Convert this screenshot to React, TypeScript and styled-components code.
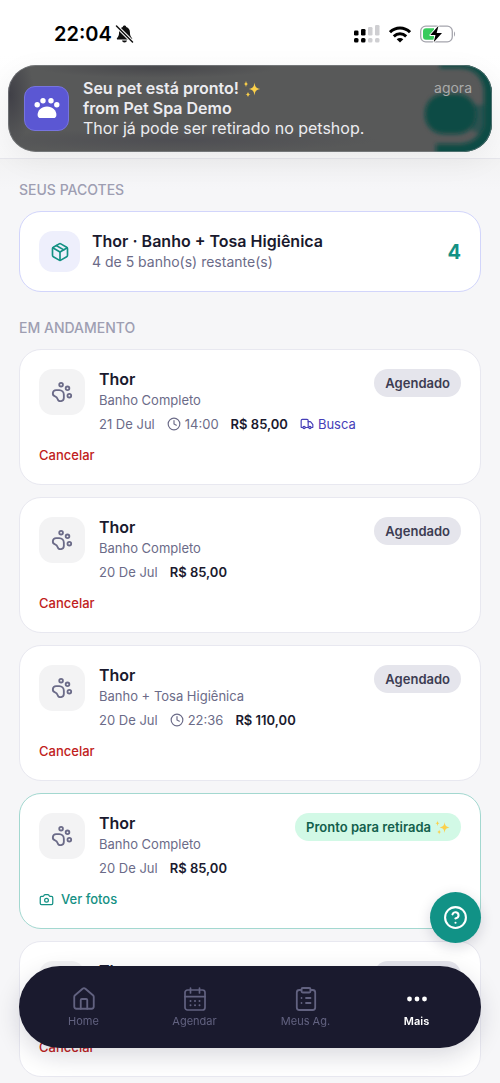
import React from "react";
import styled, { createGlobalStyle, css } from "styled-components";
import { Camera, CircleQuestionMark, Clock, House, Package, PawPrint, Truck } from "lucide-react";

const GlobalStyle = createGlobalStyle`
  *, *::before, *::after { box-sizing: border-box; }
  body {
    margin: 0;
    background: #f6f6f8;
    color: #1a1a2e;
    font-family: Inter, "Liberation Sans", sans-serif;
    font-size: 14px;
    line-height: 20px;
  }
  h1, h2, h3, p, ul { margin: 0; padding: 0; }
  ul { list-style: none; }
  button { border: 0; padding: 0; background: none; font: inherit; color: inherit; cursor: pointer; }
  svg { display: block; flex: none; }
`;

const Header = styled.header`
  padding: 20px 8px 6px;
  background: linear-gradient(#ffffff 35%, #f8f8f9);
  border-bottom: 1px solid #e6e6ec;
`;

const StatusBar = styled.div`
  display: flex;
  align-items: center;
  justify-content: space-between;
  height: 28px;
  margin: 0 36px 17px 46px;
  color: #000;
`;

const StatusGroup = styled.div<{ $gap: number }>`
  display: flex;
  align-items: center;
  gap: ${(p) => p.$gap}px;
`;

const Time = styled.time`
  font-size: 20px;
  font-weight: 600;
  line-height: 28px;
`;

const Banner = styled.section`
  position: relative;
  overflow: hidden;
  display: flex;
  gap: 14px;
  padding: 13px 20px 14px 16px;
  border-radius: 28px;
  color: #ececf0;
  background:
    radial-gradient(ellipse 120px 10px at 150px 3px, #48484c, transparent),
    radial-gradient(ellipse 24px 50px at 2px 30px, #404047, transparent),
    radial-gradient(ellipse 200px 12px at 170px 75px, #4e4e53, transparent),
    #585959;
  box-shadow: 0 8px 30px rgba(0, 0, 0, 0.06);

  &::after {
    content: "";
    position: absolute;
    inset: 0;
    border: 1px solid rgba(150, 155, 160, 0.45);
    border-radius: inherit;
    pointer-events: none;
  }
`;

const BannerGlow = styled.svg`
  position: absolute;
  top: 0;
  right: 0;
`;

const AppIcon = styled.div`
  display: grid;
  place-items: center;
  align-self: center;
  width: 45px;
  height: 45px;
  border: 1px solid #7774df;
  border-radius: 11px;
  background: #5b57d3;
`;

const BannerText = styled.div`
  flex: 1;
  font-size: 16px;
  line-height: 20px;
`;

const BannerTitle = styled.h1`
  font-size: 16px;
  line-height: 20px;
  font-weight: 600;
`;

const BannerTime = styled.span`
  position: relative;
  font-size: 14px;
  color: #a9abab;
`;

const Main = styled.main`
  padding: 21px 19px 6px;
  background: linear-gradient(#f2f2f3, #f6f6f8 30px);
`;

const SectionTitle = styled.h2`
  margin-bottom: 11px;
  font-size: 14px;
  font-weight: 500;
  line-height: 20px;
  text-transform: uppercase;
  color: #9e9eb2;
`;

const cardFrame = css`
  padding: 19px;
  border: 1px solid #e8e8f0;
  border-radius: 22px;
  background: #fff;
`;

const PackageCard = styled.section`
  ${cardFrame}
  display: flex;
  align-items: center;
  gap: 12px;
  margin-bottom: 26px;
  border-color: #d2d5fb;
`;

const PackageIcon = styled.div`
  display: grid;
  place-items: center;
  width: 41px;
  height: 41px;
  border-radius: 14px;
  background: #eeeffc;
  color: #149184;
`;

const Info = styled.div`
  flex: 1;
  min-width: 0;
`;

const Name = styled.h3`
  font-size: 16px;
  font-weight: 600;
  line-height: 21px;
`;

const Detail = styled.p<{ $large?: boolean }>`
  font-size: ${(p) => (p.$large ? 14 : 13)}px;
  line-height: 20px;
  color: #6b6b88;
`;

const Remaining = styled.strong`
  font-size: 20px;
  font-weight: 700;
  color: #149184;
`;

const CardList = styled.ul`
  display: grid;
  gap: 12px;
`;

const Card = styled.li<{ $ready?: boolean }>`
  ${cardFrame}
  ${(p) => p.$ready && "border-color: #a3d8d0;"}
`;

const CardTop = styled.div`
  display: flex;
  align-items: flex-start;
  gap: 14px;
  margin-bottom: 11px;
`;

const PetIcon = styled.div`
  display: grid;
  place-items: center;
  width: 46px;
  height: 46px;
  border-radius: 14px;
  background: #f3f3f4;
  color: #6b6b88;
`;

const TopLine = styled.div`
  display: flex;
  justify-content: space-between;
  align-items: flex-start;
  height: 21px;
`;

const Badge = styled.span<{ $ready?: boolean }>`
  display: flex;
  align-items: center;
  gap: 4px;
  padding: 4px 11px;
  border-radius: 14px;
  font-size: 13px;
  font-weight: 600;
  line-height: 20px;
  background: ${(p) => (p.$ready ? "#d2f9e6" : "#e5e5ec")};
  color: ${(p) => (p.$ready ? "#13604c" : "#3c3c52")};
`;

const Meta = styled.div`
  display: flex;
  gap: 12px;
  margin-top: 4px;
  font-size: 13px;
  line-height: 20px;
  color: #6b6b88;
`;

const MetaItem = styled.span<{ $link?: boolean }>`
  display: inline-flex;
  align-items: center;
  gap: 4px;
  ${(p) => p.$link && "color: #463eb8;"}
`;

const Price = styled.strong`
  font-weight: 600;
  color: #1a1a2e;
`;

const CardAction = styled.button<{ $ready?: boolean }>`
  display: flex;
  align-items: center;
  gap: 7px;
  font-size: 13px;
  font-weight: 500;
  line-height: 20px;
  color: ${(p) => (p.$ready ? "#149184" : "#c02020")};
`;

const HelpButton = styled.button`
  position: fixed;
  right: 19px;
  bottom: 140px;
  display: grid;
  place-items: center;
  width: 51px;
  height: 51px;
  border-radius: 50%;
  background: #119286;
  color: #fff;
  box-shadow: 0 4px 14px rgba(20, 20, 50, 0.16);
`;

const TabBar = styled.nav`
  position: fixed;
  left: 19px;
  right: 19px;
  bottom: 35px;
  display: flex;
  padding: 20px 9px 19px;
  border-radius: 41px;
  background: #1a1a2e;
  box-shadow: 0 8px 24px rgba(20, 20, 50, 0.16);
`;

const Tab = styled.button<{ $active?: boolean }>`
  flex: 1;
  display: flex;
  flex-direction: column;
  align-items: center;
  gap: 1px;
  font-size: 11px;
  font-weight: ${(p) => (p.$active ? 600 : 400)};
  line-height: 16px;
  color: ${(p) => (p.$active ? "#ffffff" : "#626280")};
`;

const BellOff = () => (
  <svg width="19" height="20" viewBox="0 0 19 20" aria-hidden="true">
    <path d="M9.5 1.5c.9 0 1.6.6 1.7 1.4 2.400.7 3.700 2.600 3.700 5.100 0 3.300.8 4.600 2 5.900.6.7.3 1.600-.7 1.600H2.800c-1 0-1.300-.9-.7-1.600 1.200-1.300 2-2.600 2-5.900 0-2.500 1.300-4.400 3.700-5.100.1-.8.8-1.400 1.700-1.400zM7 16.500h5c-.3 1.200-1.200 2-2.500 2s-2.200-.8-2.500-2z" fill="#111" />
    <path d="M1.500 2 17.500 18" stroke="#fff" strokeWidth="3.600" />
    <path d="M1.500 2 17.500 18" stroke="#111" strokeWidth="1.500" strokeLinecap="round" />
  </svg>
);

const Signal = () => (
  <svg width="26" height="18" viewBox="0 0 26 18" aria-hidden="true">
    <g fill="#000">
      <rect x="0" y="5.500" width="4.500" height="5" rx="1.300" />
      <rect x="7" y="4" width="4.500" height="6.500" rx="1.300" />
      <rect x="0" y="13" width="4.500" height="4.500" rx="1.500" />
      <rect x="7" y="13" width="4.500" height="4.500" rx="1.500" />
    </g>
    <g fill="#cfcfd2">
      <rect x="14" y="2" width="4.500" height="8.500" rx="1.300" />
      <rect x="21" y="0" width="4.500" height="10.500" rx="1.300" />
      <rect x="14" y="13" width="4.500" height="4.500" rx="1.500" />
      <rect x="21" y="13" width="4.500" height="4.500" rx="1.500" />
    </g>
  </svg>
);

const Wifi = () => (
  <svg width="22" height="17" viewBox="0 0 22 17" fill="none" stroke="#000" strokeWidth="3" aria-hidden="true">
    <path d="M1 6.200c5.700-5.500 14.300-5.500 20 0" />
    <path d="M4.800 10.300c3.600-3.400 8.800-3.400 12.400 0" />
    <path d="M11 16.500 7.700 13.200c1.900-1.700 4.700-1.700 6.600 0z" fill="#000" stroke="none" />
  </svg>
);

const Battery = () => (
  <svg width="36" height="18" viewBox="0 0 36 18" aria-hidden="true">
    <rect x=".7" y="1.200" width="31.600" height="15.600" rx="5" fill="#fff" stroke="#a5a5ad" strokeWidth="1.300" />
    <path d="M6 3.200h8v11.600H6a3 3 0 0 1-3-3V6.200a3 3 0 0 1 3-3z" fill="#38cb5c" />
    <path d="M34 6.500c1.400.6 1.400 4.400 0 5z" fill="#a5a5ad" />
    <path d="M18.500.8 10.300 10h5.200l-1.800 7.200L22 8h-5.300z" fill="#000" stroke="#fff" strokeWidth="1.800" paintOrder="stroke" strokeLinejoin="round" />
  </svg>
);

const PawLogo = () => (
  <svg width="26" height="22" viewBox="0 0 26 22" fill="#fff" aria-hidden="true">
    <circle cx="3.200" cy="7.800" r="2.700" />
    <circle cx="9" cy="3.800" r="2.700" />
    <circle cx="17" cy="3.800" r="2.700" />
    <circle cx="22.800" cy="7.800" r="2.700" />
    <path d="M13 9.500c5.500 0 9.400 4 9.400 8.400 0 2-1.200 3.100-3 3.100H6.600c-1.800 0-3-1.100-3-3.100 0-4.400 3.900-8.400 9.400-8.400z" />
  </svg>
);

const Glow = () => (
  <BannerGlow width="90" height="87" viewBox="0 0 90 87" aria-hidden="true">
    <defs>
      <filter id="soft" x="-30%" y="-30%" width="160%" height="160%">
        <feGaussianBlur stdDeviation="2" />
      </filter>
    </defs>
    <g fill="#084c45" filter="url(#soft)">
      <path d="M38-8H104V95H34V79H56C72 79 77 70 82 62V24C80 12 72 3 58 3H38Z" />
      <rect x="23" y="29" width="51" height="40" rx="19" />
      <path d="M70 40H86V70L70 66Z" opacity=".5" />
    </g>
  </BannerGlow>
);

const InlineSvg = styled.svg`
  display: inline-block;
  vertical-align: text-bottom;
`;

const Sparkles = ({ size }: { size: number }) => (
  <InlineSvg width={size} height={size} viewBox="0 0 18 18" fill="#fbd04a" aria-hidden="true">
    <path d="M11.500 2.500c.6 4.300 1.400 5.600 6 6.500-4.600.9-5.400 2.200-6 6.500-.6-4.300-1.400-5.600-6-6.500 4.600-.9 5.400-2.200 6-6.500z" />
    <path d="M3 .5C3.300 3 3.700 3.600 5.500 4 3.700 4.400 3.300 5 3 7.500 2.700 5 2.300 4.400.5 4 2.300 3.600 2.700 3 3 .5zM5 11.500c.3 2 .7 2.600 2.500 3-1.800.4-2.200 1-2.500 3-.3-2-.7-2.600-2.500-3 1.800-.4 2.200-1 2.500-3z" />
  </InlineSvg>
);

const CalendarIcon = () => (
  <svg width="26" height="26" viewBox="0 0 26 26" fill="none" stroke="currentColor" strokeWidth="1.700" strokeLinecap="round" strokeLinejoin="round" aria-hidden="true">
    <rect x="3" y="4" width="20" height="20" rx="2.500" />
    <path d="M8.500 2v5M17.500 2v5M3 10.700h20" />
    <path d="M8.500 15h.01M13 15h.01M17.500 15h.01M8.500 19.200h.01M13 19.200h.01M17.500 19.200h.01" strokeWidth="2" />
  </svg>
);

const ClipboardIcon = () => (
  <svg width="26" height="26" viewBox="0 0 26 26" fill="none" stroke="currentColor" strokeWidth="1.800" strokeLinecap="round" strokeLinejoin="round" aria-hidden="true">
    <rect x="8.500" y="2" width="9" height="4.500" rx="1.200" />
    <path d="M17.500 4h2.200a2.500 2.500 0 0 1 2.500 2.500v15a2.500 2.500 0 0 1-2.500 2.500H6.300a2.500 2.500 0 0 1-2.500-2.500v-15A2.500 2.500 0 0 1 6.300 4h2.200" />
    <path d="M13 12h4.500M13 17h4.500M8.500 12h.01M8.500 17h.01" />
  </svg>
);

const DotsIcon = () => (
  <svg width="26" height="26" viewBox="0 0 26 26" fill="currentColor" aria-hidden="true">
    <circle cx="5.500" cy="13" r="2.400" />
    <circle cx="13" cy="13" r="2.400" />
    <circle cx="20.500" cy="13" r="2.400" />
  </svg>
);

type Booking = {
  service: string;
  date: string;
  time?: string;
  price?: string;
  pickup?: boolean;
  ready?: boolean;
};

const bookings: Booking[] = [
  { service: "Banho Completo", date: "21 De Jul", time: "14:00", price: "R$ 85,00", pickup: true },
  { service: "Banho Completo", date: "20 De Jul", price: "R$ 85,00" },
  { service: "Banho + Tosa Higiênica", date: "20 De Jul", time: "22:36", price: "R$ 110,00" },
  { service: "Banho Completo", date: "20 De Jul", price: "R$ 85,00", ready: true },
  { service: "Banho Completo", date: "20 De Jul" },
];

const BookingCard = ({ service, date, time, price, pickup, ready }: Booking) => (
  <Card $ready={ready}>
    <CardTop>
      <PetIcon><PawPrint size={22} strokeWidth={2} /></PetIcon>
      <Info>
        <TopLine>
          <Name>Thor</Name>
          <Badge $ready={ready}>
            {ready ? <>Pronto para retirada <Sparkles size={15} /></> : "Agendado"}
          </Badge>
        </TopLine>
        <Detail>{service}</Detail>
        <Meta>
          <span>{date}</span>
          {time && <MetaItem><Clock size={14} />{time}</MetaItem>}
          {price && <Price>{price}</Price>}
          {pickup && <MetaItem $link><Truck size={14} />Busca</MetaItem>}
        </Meta>
      </Info>
    </CardTop>
    <CardAction type="button" $ready={ready}>
      {ready ? <><Camera size={15} />Ver fotos</> : "Cancelar"}
    </CardAction>
  </Card>
);

export default function App() {
  return (
    <>
      <GlobalStyle />
      <Header>
        <StatusBar>
          <StatusGroup $gap={3}>
            <Time>22:04</Time>
            <BellOff />
          </StatusGroup>
          <StatusGroup $gap={9}>
            <Signal />
            <Wifi />
            <Battery />
          </StatusGroup>
        </StatusBar>
        <Banner>
          <Glow />
          <AppIcon><PawLogo /></AppIcon>
          <BannerText>
            <BannerTitle>
              Seu pet está pronto! <Sparkles size={18} />
              <br />
              from Pet Spa Demo
            </BannerTitle>
            <p>Thor já pode ser retirado no petshop.</p>
          </BannerText>
          <BannerTime>agora</BannerTime>
        </Banner>
      </Header>
      <Main>
        <SectionTitle>Seus pacotes</SectionTitle>
        <PackageCard>
          <PackageIcon><Package size={20} strokeWidth={2} /></PackageIcon>
          <Info>
            <Name>Thor · Banho + Tosa Higiênica</Name>
            <Detail $large>4 de 5 banho(s) restante(s)</Detail>
          </Info>
          <Remaining>4</Remaining>
        </PackageCard>
        <SectionTitle>Em andamento</SectionTitle>
        <CardList>
          {bookings.map((b, i) => <BookingCard key={i} {...b} />)}
        </CardList>
      </Main>
      <HelpButton type="button" aria-label="Ajuda"><CircleQuestionMark size={25} /></HelpButton>
      <TabBar>
        <Tab type="button"><House size={26} strokeWidth={1.7} />Home</Tab>
        <Tab type="button"><CalendarIcon />Agendar</Tab>
        <Tab type="button"><ClipboardIcon />Meus Ag.</Tab>
        <Tab type="button" $active><DotsIcon />Mais</Tab>
      </TabBar>
    </>
  );
}
